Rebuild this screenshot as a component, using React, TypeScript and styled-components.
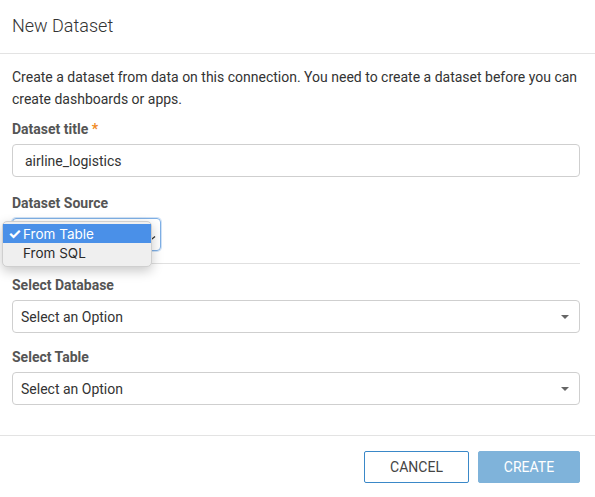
import React from "react";
import styled, { createGlobalStyle } from "styled-components";

const Global = createGlobalStyle`
  html, body { margin: 0; padding: 0; background: #fff; }
  body { font-family: Roboto, "Liberation Sans", Arial, sans-serif; color: #333; }
  * { box-sizing: border-box; }
`;

const Dialog = styled.div`
  width: 595px;
  height: 497px;
  display: flex;
  flex-direction: column;
  background: #fff;
  position: relative;
`;

const Header = styled.div`
  height: 54px;
  padding: 0 12px;
  display: flex;
  align-items: center;
  border-bottom: 1px solid #e3e3e3;
`;

const Title = styled.h1`
  margin: 0;
  font-size: 18px;
  font-weight: 300;
  color: #333;
  padding-bottom: 2px;
`;

const Body = styled.div`
  padding: 12px 15px 30px 12px;
  display: flex;
  flex-direction: column;
  border-bottom: 1px solid #e3e3e3;
`;

const Description = styled.p`
  margin: 0 0 10px;
  font-size: 14px;
  line-height: 22px;
  color: #333;
`;

const Label = styled.label<{ $gap?: number }>`
  display: block;
  margin-top: ${(p) => p.$gap ?? 0}px;
  margin-bottom: 6px;
  font-size: 14px;
  line-height: 18px;
  font-weight: 700;
  color: #555;
`;

const Required = styled.span`
  color: #f08a24;
`;

const TextInput = styled.div`
  height: 33px;
  border: 1px solid #cfcfcf;
  border-radius: 4px;
  display: flex;
  align-items: center;
  padding: 0 12px;
  font-size: 14px;
  color: #333;
`;

const SourceWrap = styled.div`
  position: relative;
  height: 33px;
`;

const NativeSelect = styled.div`
  width: 149px;
  height: 33px;
  border: 1px solid #7fb0e6;
  border-radius: 4px;
  box-shadow: 0 0 0 1px rgba(127, 176, 230, 0.35);
  display: flex;
  align-items: center;
  justify-content: flex-end;
  padding-right: 4px;
`;

const Popup = styled.div`
  position: absolute;
  left: -10px;
  top: 3px;
  width: 150px;
  padding: 2px 0 4px;
  background: #efefef;
  border: 1px solid #cfcfcf;
  border-radius: 5px;
  box-shadow: 0 4px 12px rgba(0, 0, 0, 0.22);
  z-index: 2;
`;

const Option = styled.div<{ $active?: boolean }>`
  height: 19px;
  display: flex;
  align-items: center;
  padding-left: 5px;
  font-family: Inter, "Noto Sans", "Liberation Sans", sans-serif;
  font-size: 13.5px;
  background: ${(p) => (p.$active ? "#4a90e8" : "transparent")};
  color: ${(p) => (p.$active ? "#fff" : "#2a2a2a")};
`;

const Check = styled.span`
  width: 15px;
  display: inline-block;
  font-size: 15px;
  font-weight: 700;
  line-height: 1;
`;

const Divider = styled.div`
  height: 1px;
  background: #e0e0e0;
  margin-top: 12px;
`;

const SelectBox = styled.div`
  height: 33px;
  border: 1px solid #cfcfcf;
  border-radius: 4px;
  display: flex;
  align-items: center;
  justify-content: space-between;
  padding: 0 10px 0 8px;
  font-size: 14px;
  color: #333;
`;

const Caret = styled.span`
  width: 0;
  height: 0;
  border-left: 4px solid transparent;
  border-right: 4px solid transparent;
  border-top: 4px solid #666;
`;

const Footer = styled.div`
  display: flex;
  justify-content: flex-end;
  gap: 9px;
  padding: 15px 15px 0 0;
`;

const Button = styled.button<{ $primary?: boolean }>`
  height: 32px;
  width: ${(p) => (p.$primary ? 102 : 105)}px;
  border-radius: 2px;
  font-family: Roboto, "Liberation Sans", Arial, sans-serif;
  font-size: 14px;
  text-transform: uppercase;
  cursor: pointer;
  border: 1px solid ${(p) => (p.$primary ? "#7fb3da" : "#3a88c8")};
  background: ${(p) => (p.$primary ? "#7fb3da" : "#fff")};
  color: ${(p) => (p.$primary ? "#fff" : "#444")};
`;

export default function App() {
  return (
    <>
      <Global />
      <Dialog>
        <Header>
          <Title>New Dataset</Title>
        </Header>
        <Body>
          <Description>
            Create a dataset from data on this connection. You need to create a dataset before you can
            create dashboards or apps.
          </Description>
          <Label>
            Dataset title <Required>*</Required>
          </Label>
          <TextInput>airline_logistics</TextInput>
          <Label $gap={17}>Dataset Source</Label>
          <SourceWrap>
            <NativeSelect>
              <svg width="8" height="10" viewBox="0 0 8 10">
                <path d="M1 6.5 L4 9 L7 6.5" fill="none" stroke="#333" strokeWidth="1.3" />
              </svg>
            </NativeSelect>
            <Popup>
              <Option $active>
                <Check>✓</Check>From Table
              </Option>
              <Option>
                <Check />From SQL
              </Option>
            </Popup>
          </SourceWrap>
          <Divider />
          <Label $gap={12}>Select Database</Label>
          <SelectBox>
            Select an Option
            <Caret />
          </SelectBox>
          <Label $gap={15}>Select Table</Label>
          <SelectBox>
            Select an Option
            <Caret />
          </SelectBox>
        </Body>
        <Footer>
          <Button>Cancel</Button>
          <Button $primary>Create</Button>
        </Footer>
      </Dialog>
    </>
  );
}
